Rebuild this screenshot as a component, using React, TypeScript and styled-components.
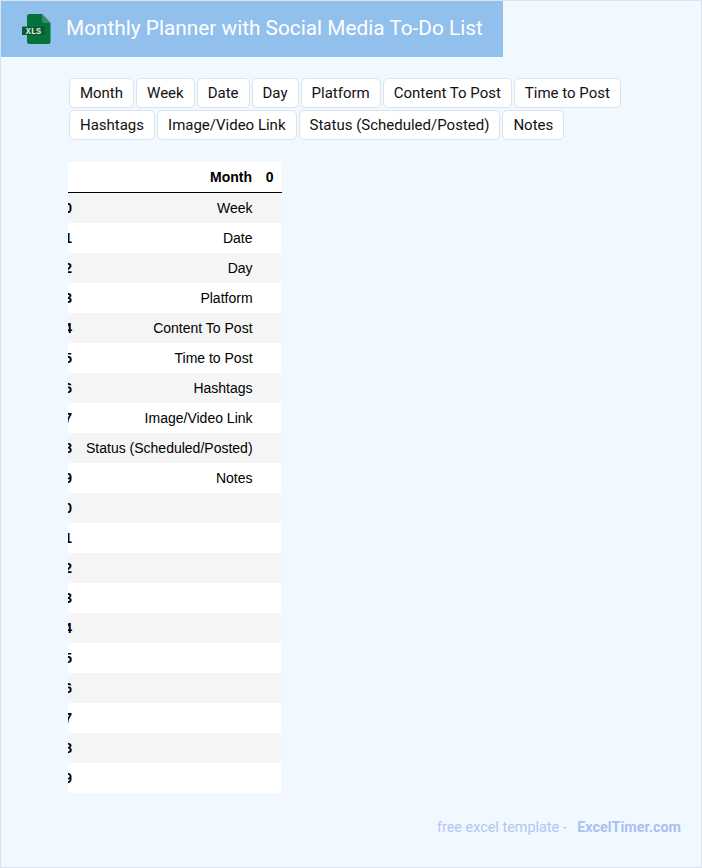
import React from 'react'
import styled, { createGlobalStyle } from 'styled-components'

const fields = ['Month', 'Week', 'Date', 'Day', 'Platform', 'Content To Post', 'Time to Post', 'Hashtags', 'Image/Video Link', 'Status (Scheduled/Posted)', 'Notes']

const rows = Array.from({ length: 20 }, (_, i) => ({ index: i, label: fields[i + 1] || '' }))

const App: React.FC = () => {
  return (
    <Page>
      <GlobalStyle />
      <Header>
        <FileIcon />
        <Title>Monthly Planner with Social Media To-Do List</Title>
      </Header>
      <Tags>
        {fields.map((field) => (
          <Tag key={field}>{field}</Tag>
        ))}
      </Tags>
      <TableClip>
        <Table>
          <thead>
            <tr>
              <IndexHead />
              <HeadCell>Month</HeadCell>
              <ZeroHead>0</ZeroHead>
            </tr>
          </thead>
          <tbody>
            {rows.map((row) => (
              <Row key={row.index} $odd={row.index % 2 === 0}>
                <IndexCell>{row.index}</IndexCell>
                <Cell>{row.label}</Cell>
                <EmptyCell />
              </Row>
            ))}
          </tbody>
        </Table>
      </TableClip>
      <Footer>
        free excel template - <FooterLink>ExcelTimer.com</FooterLink>
      </Footer>
    </Page>
  )
}

const FileIcon: React.FC = () => (
  <IconSvg viewBox="0 0 30 30" width="30" height="30">
    <path d="M7.500 0 H20 L28.500 9 V27.500 Q28.500 30 26 30 H7.500 Q5 30 5 27.500 V2.500 Q5 0 7.500 0 Z" fill="#04733b" />
    <path d="M20 0 L28.500 9 H22.500 Q20 9 20 6.500 Z" fill="#2f8f5e" />
    <rect x="0" y="12.500" width="23" height="8.500" fill="#0b5a33" />
    <text x="11.500" y="19.500" fontFamily="'Liberation Mono', monospace" fontSize="8.500" fill="#e4f2e6" textAnchor="middle" fontWeight="700">XLS</text>
  </IconSvg>
)

const GlobalStyle = createGlobalStyle`
  html, body {
    margin: 0;
    padding: 0;
    background: #f2f8ff;
  }
`

const Page = styled.div`
  box-sizing: border-box;
  width: 702px;
  height: 868px;
  border: 1px solid #d9e4f0;
  background: #f2f8ff;
  font-family: Roboto, sans-serif;
  display: flex;
  flex-direction: column;
`

const Header = styled.div`
  box-sizing: border-box;
  width: 502px;
  height: 56px;
  background: #92c0ec;
  display: flex;
  align-items: center;
  padding-left: 21px;
  gap: 14px;
`

const IconSvg = styled.svg`
  flex: none;
`

const Title = styled.div`
  color: #fff;
  font-size: 20.8px;
  white-space: nowrap;
  padding-bottom: 2px;
`

const Tags = styled.div`
  display: flex;
  flex-wrap: wrap;
  gap: 2px;
  margin: 21px 0 0 67.95px;
  width: 600px;
`

const Tag = styled.div`
  box-sizing: border-box;
  height: 30px;
  padding: 0 10px;
  display: flex;
  align-items: center;
  background: #fff;
  border: 1px solid #d9e4f0;
  border-radius: 5px;
  color: #111;
  font-size: 15px;
  white-space: nowrap;
`

const TableClip = styled.div`
  margin: 22px 0 0 67px;
  width: 214px;
  overflow: hidden;
`

const Table = styled.table`
  border-collapse: collapse;
  border-spacing: 0;
  margin-left: -20px;
  font-family: 'Liberation Sans', Arial, sans-serif;
  font-size: 14px;
  color: #000;
  background: #fff;
`

const HeadCell = styled.th`
  box-sizing: border-box;
  height: 30px;
  padding: 0 0.5px 0 0;
  text-align: right;
  font-weight: 700;
  border-bottom: 1px solid #000;
`

const IndexHead = styled(HeadCell)`
  width: 24px;
  min-width: 24px;
`

const ZeroHead = styled(HeadCell)`
  position: relative;
  width: 28px;
  min-width: 28px;
  padding-right: 7px;

  &::after {
    content: '';
    position: absolute;
    right: -1px;
    bottom: -1px;
    width: 1px;
    height: 1px;
    background: #000;
  }
`

const Row = styled.tr<{ $odd: boolean }>`
  background: ${(p) => (p.$odd ? '#f5f5f5' : '#fff')};
`

const Cell = styled.td`
  height: 30px;
  padding: 0 0 0 14px;
  text-align: right;
  white-space: nowrap;
`

const IndexCell = styled.th`
  height: 30px;
  padding: 0;
  text-align: right;
  font-weight: 700;
  font-size: 14px;
`

const EmptyCell = styled.td`
  height: 30px;
  padding: 0;
`

const Footer = styled.div`
  margin: 26px 20px 0 0;
  text-align: right;
  color: #b3c6f2;
  font-size: 14.4px;
`

const FooterLink = styled.span`
  font-weight: 700;
  color: #a9c0f2;
  margin-left: 7px;
`

export default App
